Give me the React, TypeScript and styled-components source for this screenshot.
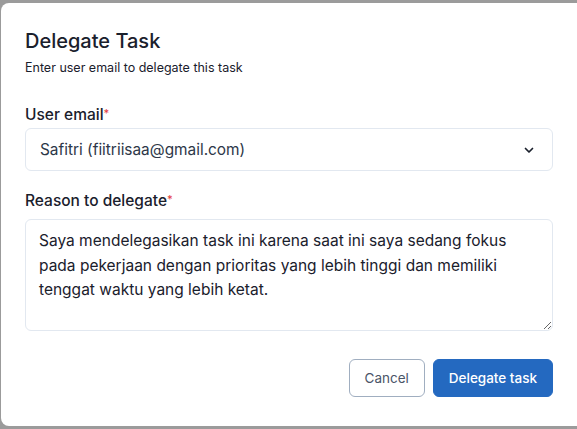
import React from "react";
import styled, { createGlobalStyle } from "styled-components";

const GlobalStyle = createGlobalStyle`
  html, body {
    margin: 0;
    padding: 0;
    background: #9b9b9b;
    overflow: hidden;
  }
  body {
    font-family: "Inter", "Liberation Sans", sans-serif;
  }
`;

const App = () => {
  return (
    <>
      <GlobalStyle />
      <Page>
        <Modal>
          <Title>Delegate Task</Title>
          <Subtitle>Enter user email to delegate this task</Subtitle>
          <Field gap={3} top={29}>
            <Label>
              User email<Required>*</Required>
            </Label>
            <SelectBox>
              <SelectValue>Safitri (fiitriisaa@gmail.com)</SelectValue>
              <svg width="12" height="12" viewBox="0 0 24 24" fill="none">
                <path
                  d="M5 9l7 7 7-7"
                  stroke="#1a202c"
                  strokeWidth="3.4"
                  strokeLinecap="round"
                  strokeLinejoin="round"
                />
              </svg>
            </SelectBox>
          </Field>
          <Field gap={8} top={20}>
            <Label>
              Reason to delegate<Required>*</Required>
            </Label>
            <TextArea
              defaultValue="Saya mendelegasikan task ini karena saat ini saya sedang fokus pada pekerjaan dengan prioritas yang lebih tinggi dan memiliki tenggat waktu yang lebih ketat."
            />
          </Field>
          <Footer>
            <Button variant="outline">Cancel</Button>
            <Button variant="primary">Delegate task</Button>
          </Footer>
        </Modal>
      </Page>
    </>
  );
};
export default App;

const Page = styled.div`
  width: 577px;
  height: 429px;
  padding: 3px 0 0 1px;
  box-sizing: border-box;
  overflow: hidden;
`;

const Modal = styled.div`
  width: 584px;
  height: 423px;
  background: #ffffff;
  border-radius: 8px;
  padding: 26px 32px 0 24px;
  box-sizing: border-box;
  display: flex;
  flex-direction: column;
`;

const Title = styled.h2`
  margin: 0;
  font-size: 20px;
  font-weight: 450;
  line-height: 24px;
  color: #1a202c;
`;

const Subtitle = styled.p`
  margin: 7px 0 0;
  font-size: 12.5px;
  line-height: 16px;
  color: #1a202c;
`;

const Field = styled.div<{ gap: number; top: number }>`
  display: flex;
  flex-direction: column;
  margin-top: ${(p) => p.top}px;
  gap: ${(p) => p.gap}px;
`;

const Label = styled.label`
  font-size: 15.5px;
  font-weight: 500;
  line-height: 20px;
  color: #1a202c;
`;

const Required = styled.span`
  color: #e53e3e;
  font-size: 11px;
  vertical-align: top;
  line-height: 16px;
`;

const SelectBox = styled.div`
  display: flex;
  align-items: center;
  justify-content: space-between;
  height: 43px;
  box-sizing: border-box;
  border: 1px solid #e2e8f0;
  border-radius: 6px;
  padding: 0 17px 0 14px;
`;

const SelectValue = styled.span`
  font-size: 15.4px;
  color: #2d3748;
`;

const TextArea = styled.textarea`
  height: 112px;
  box-sizing: border-box;
  border: 1px solid #e2e8f0;
  border-radius: 6px;
  padding: 9px 14px 9px 13px;
  font-family: "Inter", "Liberation Sans", sans-serif;
  font-size: 15.5px;
  line-height: 24.5px;
  color: #1a202c;
  resize: vertical;
  outline: none;
`;

const Footer = styled.div`
  display: flex;
  justify-content: flex-end;
  gap: 8px;
  margin-top: 28px;
`;

const Button = styled.button<{ variant: "outline" | "primary" }>`
  height: 38px;
  border-radius: 6px;
  font-family: "Inter", "Liberation Sans", sans-serif;
  font-size: 13.5px;
  padding: 0 15px;
  cursor: pointer;
  border: 1px solid
    ${(p) => (p.variant === "outline" ? "#a0aec0" : "#2469c0")};
  background: ${(p) => (p.variant === "outline" ? "#ffffff" : "#2469c0")};
  color: ${(p) => (p.variant === "outline" ? "#4a5568" : "#ffffff")};
  font-weight: ${(p) => (p.variant === "outline" ? 400 : 500)};
`;
